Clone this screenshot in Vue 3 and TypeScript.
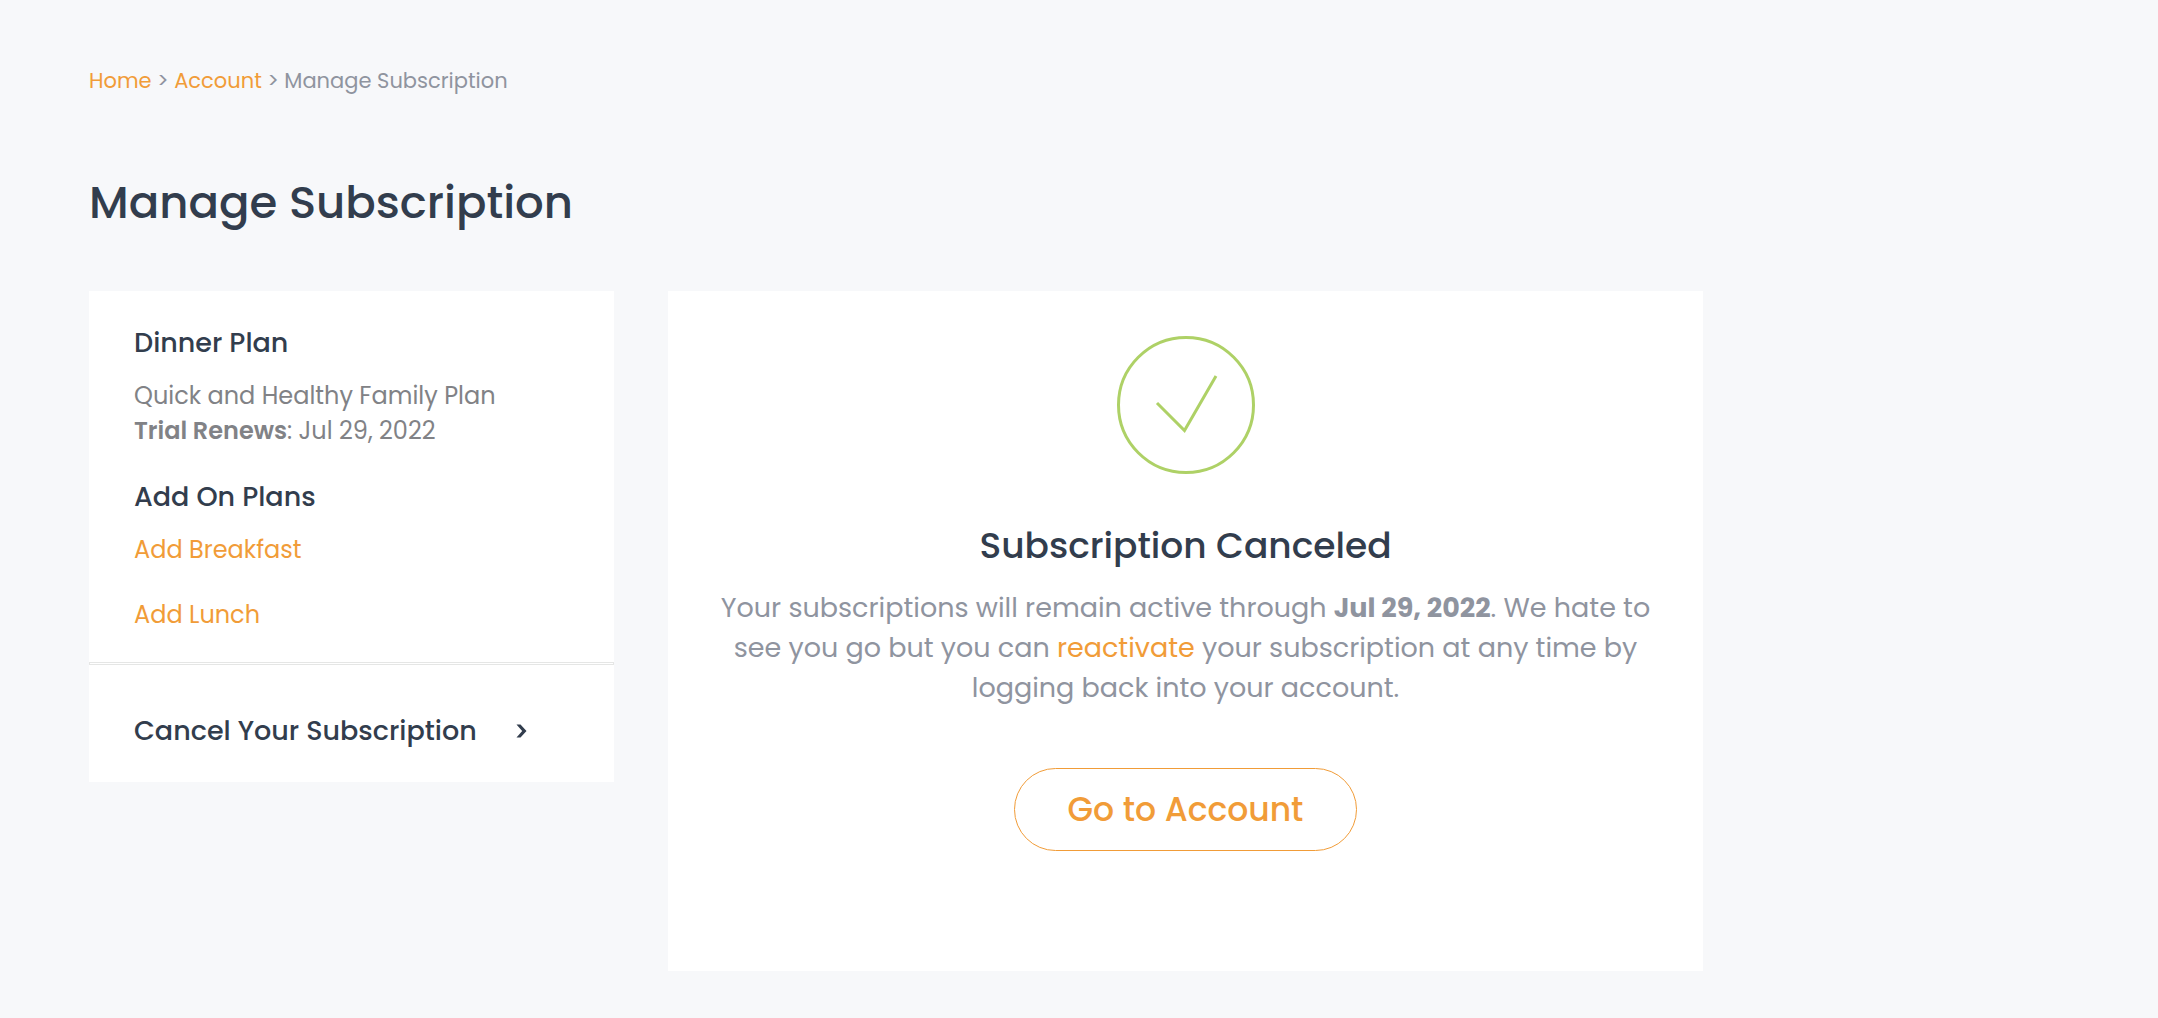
<script setup lang="ts">
interface AddOn {
  label: string
  href: string
}

const renewalDate: string = 'Jul 29, 2022'
const planName: string = 'Quick and Healthy Family Plan'
const addOns: AddOn[] = [
  { label: 'Add Breakfast', href: '#breakfast' },
  { label: 'Add Lunch', href: '#lunch' },
]
</script>

<template>
  <div class="page">
    <nav class="breadcrumb" aria-label="Breadcrumb">
      <a href="#home">Home</a> &gt; <a href="#account">Account</a> &gt; <span>Manage Subscription</span>
    </nav>

    <h1 class="title">Manage Subscription</h1>

    <div class="columns">
      <aside class="card">
        <section class="plans">
          <h2>Dinner Plan</h2>
          <p class="plan">
            {{ planName }}<br />
            <strong>Trial Renews</strong>: {{ renewalDate }}
          </p>
          <h2>Add On Plans</h2>
          <ul class="addons">
            <li v-for="item in addOns" :key="item.label">
              <a :href="item.href">{{ item.label }}</a>
            </li>
          </ul>
        </section>
        <hr class="divider" />
        <a class="cancel" href="#cancel">
          <span>Cancel Your Subscription</span>
          <svg width="11" height="14" viewBox="0 0 11 14" aria-hidden="true">
            <path d="M0.500 0.500H4.500L10.500 7L4.500 13.500H0.500L6.200 7Z" fill="currentColor" />
          </svg>
        </a>
      </aside>

      <main class="card result">
        <svg class="check" width="138" height="138" viewBox="0 0 138 138" fill="none" stroke="#aed166" stroke-width="3" aria-hidden="true">
          <circle cx="69" cy="69" r="67.5" />
          <path d="M40 67L67.500 94.500L99 40" />
        </svg>
        <h2>Subscription Canceled</h2>
        <p>
          Your subscriptions will remain active through <strong>{{ renewalDate }}</strong>. We hate to
          see you go but you can <a href="#reactivate">reactivate</a> your subscription at any time by
          logging back into your account.
        </p>
        <button type="button">Go to Account</button>
      </main>
    </div>
  </div>
</template>

<style>
body {
  background: #f7f8fa;
}
</style>

<style scoped>
.page {
  box-sizing: border-box;
  max-width: 1703px;
  padding: 61px 0 47px 89px;
  color: #8f949f;
  font-family: Poppins, Inter, "Open Sans", sans-serif;
}

a {
  color: #f19c38;
  text-decoration: none;
}

.breadcrumb {
  font-size: 21px;
  line-height: 40px;
}

.title {
  margin: 70px 0 56px;
  color: #323d4d;
  font-size: 45px;
  font-weight: 500;
  line-height: 64px;
}

.columns {
  display: grid;
  grid-template-columns: minmax(0, 525fr) minmax(0, 1035fr);
  align-items: start;
  gap: 54px;
}

.card {
  background: #fff;
}

.plans {
  padding: 32px 45px 30px;
}

.plans h2 {
  margin: 0;
  color: #323d4d;
  font-size: 27px;
  font-weight: 500;
  line-height: 40px;
}

.plan {
  margin: 15px 0 29px;
  color: #818286;
  font-size: 24px;
  line-height: 35px;
}

.plan strong {
  font-weight: 600;
}

.addons {
  display: flex;
  flex-direction: column;
  gap: 30px;
  margin: 15px 0 0;
  padding: 0;
  list-style: none;
  font-size: 24px;
  line-height: 35px;
}

.divider {
  height: 1px;
  margin: 0;
  border: 1px solid #e5e6e5;
}

.cancel {
  display: flex;
  align-items: center;
  gap: 39px;
  padding: 46px 45px 31px;
  color: #323d4d;
  font-size: 27px;
  font-weight: 500;
  line-height: 40px;
}

.result {
  display: flex;
  flex-direction: column;
  align-items: center;
  padding: 45px 45px 120px;
  text-align: center;
}

.check {
  display: block;
}

.result h2 {
  margin: 47px 0 0;
  color: #323d4d;
  font-size: 36px;
  font-weight: 500;
  line-height: 50px;
}

.result p {
  margin: 17px 0 60px;
  font-size: 27px;
  line-height: 40px;
}

.result p strong {
  font-weight: 700;
}

button {
  padding: 0 53px;
  border: 1px solid #f19c38;
  border-radius: 42px;
  background: transparent;
  color: #f19c38;
  font-family: inherit;
  font-size: 33px;
  font-weight: 500;
  line-height: 81px;
}
</style>
